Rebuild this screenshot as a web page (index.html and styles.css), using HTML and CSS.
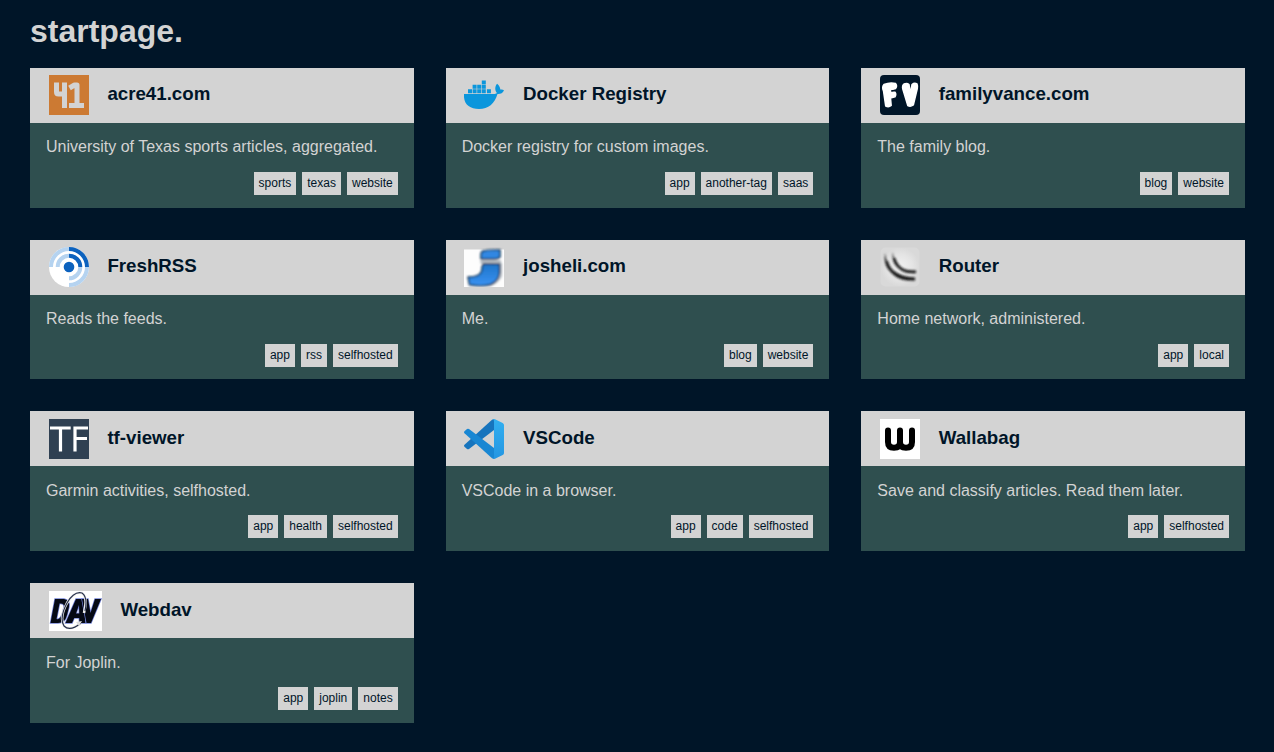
FILE: index.html
```html
<!DOCTYPE html>
<html lang="en">
<head>
<meta charset="utf-8">
<title>startpage.</title>
<link rel="stylesheet" href="styles.css">
</head>
<body>
<h1 class="title">startpage.</h1>
<main class="grid">
  <article class="card">
    <header class="head"><svg class="icon" viewBox="0 0 40 40"><defs><filter id="soft"><feGaussianBlur stdDeviation=".45"/></filter><filter id="softer"><feGaussianBlur stdDeviation=".8"/></filter></defs><path fill="#cc7a33" d="M0 0h40v40H0z"/><path filter="url(#soft)" fill="none" stroke="#d3d3d3" stroke-width="5" stroke-linejoin="round" d="M7.500 7.500V17q0 2 2 2h6M15.500 7.500V33M20.500 13l5-3h2.500V31M20 30.500h15"/></svg><h2 class="name">acre41.com</h2></header>
    <div class="body"><p class="desc">University of Texas sports articles, aggregated.</p><div class="tags"><span class="tag">sports</span><span class="tag">texas</span><span class="tag">website</span></div></div>
  </article>
  <article class="card">
    <header class="head"><svg class="icon" viewBox="0 0 40 40"><path fill="#0b96dc" d="M0 19h29.500c1.500 0 2.700-.4 3.400-1-2.200-2.800-2.200-6.700.2-9.300 2 1.500 3.100 3.600 3.200 5.900 1.400-.3 2.800-.1 3.700.7-1.200 2.800-3.500 4-6.500 3.800C30.500 29 24.500 34 15 34 5.500 34-.8 29 0 19z"/><path fill="#0b96dc" d="M4 14.200h4v4H4zM8.600 14.200h4v4h-4zM13.200 14.200h4v4h-4zM17.800 14.200h4v4h-4zM22.900 14.200h4v4h-4zM8.600 9.800h4v3.900h-4zM13.200 9.800h4v3.900h-4zM17.800 9.800h4v3.900h-4zM17.800 5.500h4v3.700h-4z"/></svg><h2 class="name">Docker Registry</h2></header>
    <div class="body"><p class="desc">Docker registry for custom images.</p><div class="tags"><span class="tag">app</span><span class="tag">another-tag</span><span class="tag">saas</span></div></div>
  </article>
  <article class="card">
    <header class="head"><svg class="icon" viewBox="0 0 40 40"><rect width="40" height="40" rx="4" fill="#001528"/><g filter="url(#soft)" fill="#fff" stroke="#fff" stroke-width="1.500" stroke-linejoin="round"><path d="M4 9.500q6-2.500 11.500-1 2 2.500 0 5-2.500.8-5 .8v3.500q2.500-.8 4.500-.5 1.500 2 0 4.500l-4.500 1.200.7 7.500q-2.500 2-5.500.5L3.500 16q-1.800-4 .5-6.500z"/><path d="M24 9q3-1.300 5 .5l1.500 9L32 9.500q2.500-2 5-.5.8 2 .3 4.500l-4 16.500q-3 2-5.500.5L22.800 14q-.8-3.500 1.200-5z"/></g></svg><h2 class="name">familyvance.com</h2></header>
    <div class="body"><p class="desc">The family blog.</p><div class="tags"><span class="tag">blog</span><span class="tag">website</span></div></div>
  </article>
  <article class="card">
    <header class="head"><svg class="icon" viewBox="0 0 40 40"><circle cx="20" cy="20" r="20" fill="#fff"/><g fill="none" stroke-width="4"><path stroke="#b5d3f0" d="M2 20A18 18 0 0 1 20 2M38 20A18 18 0 0 1 20 38M8.700 20A11.300 11.300 0 0 1 20 8.700M31.300 20A11.300 11.300 0 0 1 20 31.300"/><path stroke="#0c62be" d="M20 2A18 18 0 0 1 38 20M20 8.700A11.300 11.300 0 0 1 31.300 20"/></g><circle cx="20" cy="20" r="5.300" fill="#0c62be"/></svg><h2 class="name">FreshRSS</h2></header>
    <div class="body"><p class="desc">Reads the feeds.</p><div class="tags"><span class="tag">app</span><span class="tag">rss</span><span class="tag">selfhosted</span></div></div>
  </article>
  <article class="card">
    <header class="head"><svg class="icon" viewBox="0 0 40 40"><defs><linearGradient id="jf" x2="0" y2="1"><stop stop-color="#1f75ca"/><stop offset="1" stop-color="#3992f2"/></linearGradient></defs><path fill="#fdfdfd" d="M0 2.500h40V40H0z"/><g filter="url(#softer)"><path fill="#b2b9c1" d="M16 14l2-1h19v3l-20 1zM36 16h2v13q-3 7-11 10H8v-2h18q8-3 10-9z"/><path fill="#3287e2" stroke="#123050" stroke-width="1.500" stroke-linejoin="round" d="M19 4q6-1.500 17-1v7q-2 2-5 2H17V7q0-2 2-3z"/><path fill="url(#jf)" stroke="#123050" stroke-width="1.500" stroke-linejoin="round" d="M19.500 17h16v9q-1 8-9 11.500-9 2.500-21 .3L4 30q8 0 11-2.500 3-2 3-6.500 0-2 1.500-4z"/></g></svg><h2 class="name">josheli.com</h2></header>
    <div class="body"><p class="desc">Me.</p><div class="tags"><span class="tag">blog</span><span class="tag">website</span></div></div>
  </article>
  <article class="card">
    <header class="head"><svg class="icon" viewBox="0 0 40 40"><defs><radialGradient id="rb"><stop stop-color="#f2f2f2"/><stop offset=".65" stop-color="#e4e4e4"/><stop offset="1" stop-color="#d9d9d9"/></radialGradient></defs><rect x=".5" y=".5" width="39" height="39" rx="5" fill="url(#rb)"/><g filter="url(#softer)"><path fill="#111" d="M5 6q1 12 9 18 8 6 21 6.500v3q-15 1-23-7Q3 19 5 6zM13 5q0 9 6 14 6 5 17 4.500v2.500q-12 1-19-6Q11 14 13 5z"/><path fill="none" stroke="#1a1a1a" stroke-width="2.600" d="M6.500 14q3 10 11 15 4 2.500 9 3M14 11q2 7 8 11.500 3 2 7 2.500"/></g></svg><h2 class="name">Router</h2></header>
    <div class="body"><p class="desc">Home network, administered.</p><div class="tags"><span class="tag">app</span><span class="tag">local</span></div></div>
  </article>
  <article class="card">
    <header class="head"><svg class="icon" viewBox="0 0 40 40"><path fill="#2f4052" d="M0 0h40v40H0z"/><path fill="none" stroke="#fff" stroke-width="3.200" d="M1 9h20.700M11.500 9v23.500M39 9H26v23.500M26 19.500h12"/></svg><h2 class="name">tf-viewer</h2></header>
    <div class="body"><p class="desc">Garmin activities, selfhosted.</p><div class="tags"><span class="tag">app</span><span class="tag">health</span><span class="tag">selfhosted</span></div></div>
  </article>
  <article class="card">
    <header class="head"><svg class="icon" viewBox="0 0 40 40"><defs><linearGradient id="vs" x2="0" y2="1"><stop stop-color="#32aff0"/><stop offset="1" stop-color="#2496e2"/></linearGradient></defs><path fill="#1674bd" d="M30 0v11L5 30q-1 .7-2 0L.5 27.700q-1-1 0-2L28 .7z"/><path fill="#1987d3" d="M30 40V29L5 10q-1-.7-2 0L.5 12.300q-1 1 0 2L28 39.300z"/><path fill="url(#vs)" d="M28 .7Q29.500-.2 31 .2l7.700 3.700q1.300.7 1.300 2.200v27.800q0 1.500-1.300 2.200L31 39.800q-1.500.4-3-.5 2 .8 2-1.300V2q0-2.100-2-1.300z"/></svg><h2 class="name">VSCode</h2></header>
    <div class="body"><p class="desc">VSCode in a browser.</p><div class="tags"><span class="tag">app</span><span class="tag">code</span><span class="tag">selfhosted</span></div></div>
  </article>
  <article class="card">
    <header class="head"><svg class="icon" viewBox="0 0 40 40"><path fill="#fff" d="M0 0h40v40H0z"/><path fill="none" stroke="#000" stroke-width="6" stroke-linecap="round" stroke-linejoin="round" d="M8 11.500v11.500q0 5.700 6 5.700t6-5.700v-11.500 11.500q0 5.700 6 5.700t6-5.700v-11.500"/></svg><h2 class="name">Wallabag</h2></header>
    <div class="body"><p class="desc">Save and classify articles. Read them later.</p><div class="tags"><span class="tag">app</span><span class="tag">selfhosted</span></div></div>
  </article>
  <article class="card">
    <header class="head"><svg class="icon wide" viewBox="0 0 53 40"><path fill="#fff" d="M0 0h53v40H0z"/><g fill="#050914" fill-rule="evenodd" stroke="#7484d8" stroke-width="1.400" paint-order="stroke"><path d="M6 8h9q6 1 5 8l-2 8q-2 8-9 8H1.500zM10.500 12.500L7.500 28q4 1 6-6l1.500-6q.5-4-4.500-3.500z"/><path d="M27 8h8l1.500 24h-6l-.3-5h-5L23 32h-6.500zM30 14l-3 8.500h3.300z"/><path d="M33 8h6l2.500 14L46 8h6L42 32h-4.500z"/></g><g fill="none"><path stroke="#eee" stroke-width="2.600" d="M32 32Q21 41 15 35 10 27 18 12 25 0 33 2q6 4 2 20"/><path stroke="#26304a" stroke-width="1.200" d="M32 32Q21 41 15 35 10 27 18 12 25 0 33 2q6 4 3 18"/></g><path fill="#ddd" d="M27 31l6-1-3 5z"/></svg><h2 class="name">Webdav</h2></header>
    <div class="body"><p class="desc">For Joplin.</p><div class="tags"><span class="tag">app</span><span class="tag">joplin</span><span class="tag">notes</span></div></div>
  </article>
</main>
</body>
</html>
```
FILE: styles.css
```css
* { box-sizing: border-box; }
body {
  margin: 0;
  padding: 13px 29px 0 30px;
  min-height: 752px;
  background: #001528;
  color: #d3d3d3;
  font-family: "Liberation Sans", Arial, sans-serif;
  font-size: 16px;
}
.title { margin: 0 0 18px; font-size: 32px; line-height: 37px; }
.grid { display: grid; grid-template-columns: repeat(3, 1fr); gap: 32px; }
.card { height: 139.7px; background: #2f4f4f; }
.head {
  display: flex;
  align-items: flex-start;
  gap: 18.700px;
  height: 55px;
  padding: 7.450px 18.700px 0;
  background: #d3d3d3;
  color: #001528;
}
.icon { display: block; width: 40px; height: 40px; flex: none; }
.wide { width: 53px; }
.name { margin: 0; font-size: 18.720px; line-height: 37px; }
.body { padding: 14.450px 16px 0; }
.desc { margin: 0; line-height: 19px; }
.tags { display: flex; justify-content: flex-end; gap: 6px; margin-top: 15.550px; }
.tag {
  height: 23px;
  padding: 0 5px;
  background: #d3d3d3;
  color: #001528;
  font-size: 12px;
  line-height: 22px;
}
```
